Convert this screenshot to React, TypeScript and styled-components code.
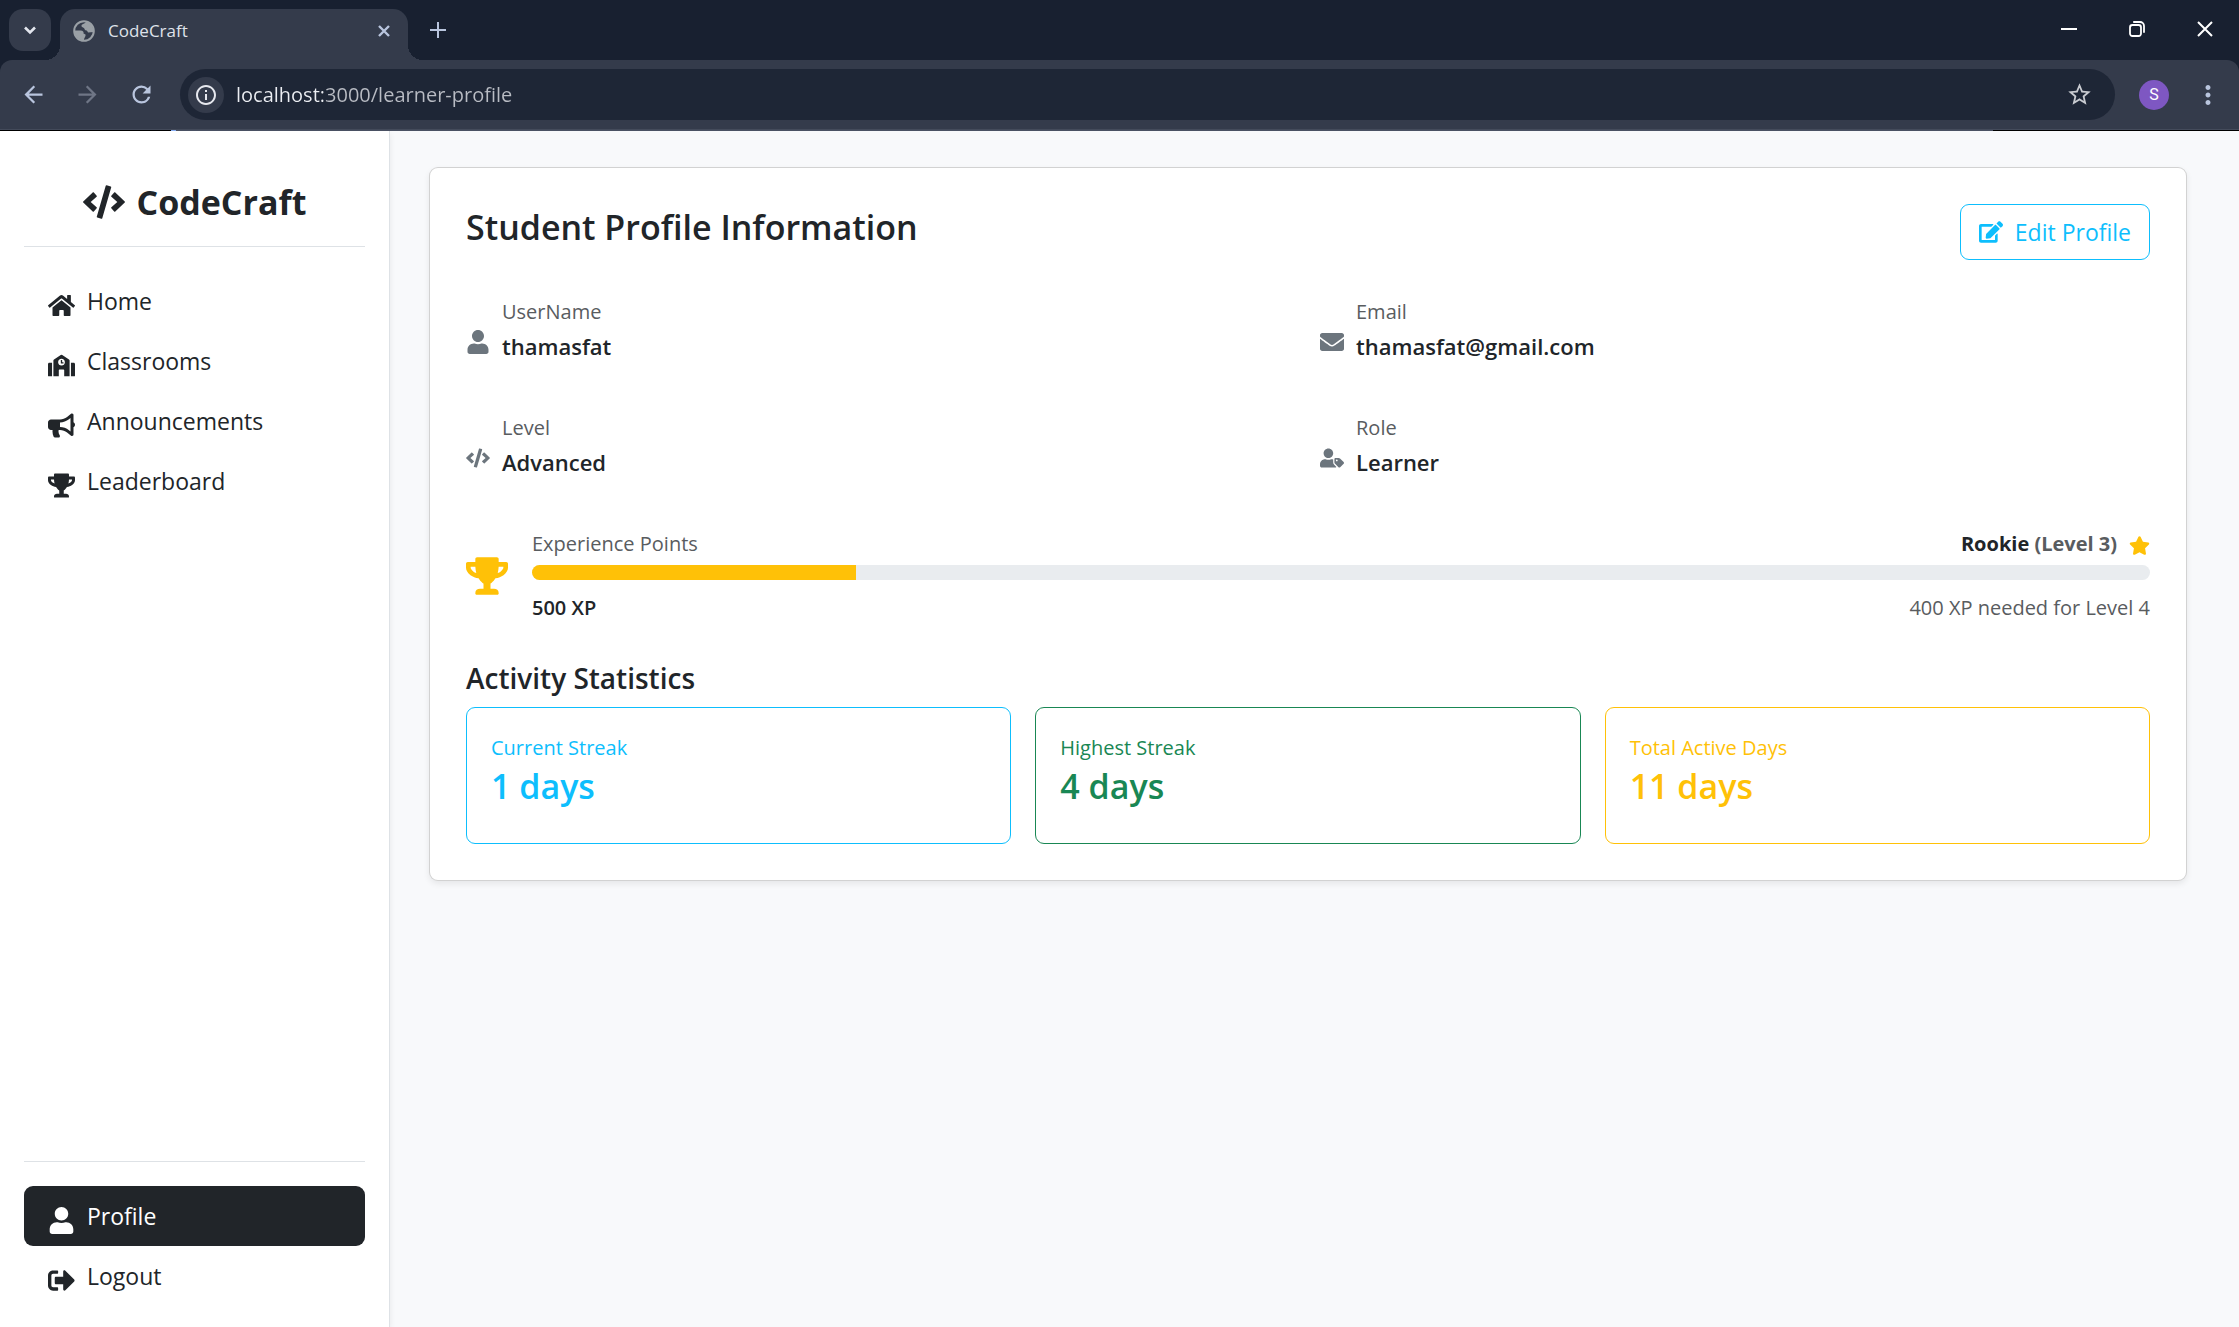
import React from "react";
import styled, { createGlobalStyle, css } from "styled-components";
import {
  FaBullhorn,
  FaCode,
  FaEdit,
  FaEnvelope,
  FaHome,
  FaSchool,
  FaSignOutAlt,
  FaStar,
  FaTrophy,
  FaUser,
  FaUserTag,
} from "react-icons/fa";
import {
  MdArrowBack,
  MdArrowForward,
  MdInfoOutline,
  MdMoreVert,
  MdRefresh,
  MdStarBorder,
} from "react-icons/md";

const color = {
  titleBar: "#182030",
  toolbar: "#343b4b",
  omnibox: "#1e2636",
  chromeIcon: "#b9c5de",
  ink: "#212529",
  inkSoft: "#595c5f",
  iconGray: "#6c757d",
  line: "#dee2e6",
  page: "#f8f9fb",
  info: "#0dbefd",
  success: "#198754",
  warning: "#ffc107",
};

const GlobalStyle = createGlobalStyle`
  *, *::before, *::after { box-sizing: border-box; }
  html, body, #root { height: 100%; }
  body {
    margin: 0;
    color: ${color.ink};
    background: ${color.page};
    font-family: "Open Sans", "Noto Sans", sans-serif;
    font-size: 22px;
    line-height: 36px;
  }
  h1, h2, h3, p, ul, dl, dd { margin: 0; padding: 0; }
  button, input { font: inherit; color: inherit; }
  button { cursor: pointer; }
  svg { display: block; flex: none; }
`;

const Window = styled.div`
  display: flex;
  flex-direction: column;
  min-height: 100%;
`;

/* ---------- browser frame ---------- */

const TitleBar = styled.header`
  display: flex;
  align-items: flex-end;
  height: 60px;
  padding-left: 9px;
  background: ${color.titleBar};
`;

const ChromeButton = styled.button<{ $size?: number; $dim?: boolean }>`
  display: flex;
  flex: none;
  align-items: center;
  justify-content: center;
  width: ${(p) => p.$size ?? 42}px;
  height: ${(p) => p.$size ?? 42}px;
  padding: 0;
  border: 0;
  border-radius: 50%;
  background: none;
  color: ${(p) => (p.$dim ? "#6f7686" : color.chromeIcon)};
`;

const TabSearch = styled(ChromeButton)`
  margin-bottom: 9px;
  border-radius: 14px;
  background: ${color.toolbar};
  color: #e3e6ee;
`;

const Tab = styled.div`
  position: relative;
  display: flex;
  align-items: center;
  gap: 12px;
  width: 348px;
  height: 51px;
  margin-left: 9px;
  padding: 0 12px 8px;
  border-radius: 15px 15px 0 0;
  background: ${color.toolbar};
  color: #dfe2ea;
  font-size: 17px;
  line-height: 24px;

  &::before,
  &::after {
    content: "";
    position: absolute;
    bottom: 0;
    width: 15px;
    height: 15px;
  }
  &::before {
    right: 100%;
    background: radial-gradient(circle at 0 0, transparent 15px, ${color.toolbar} 15px);
  }
  &::after {
    left: 100%;
    background: radial-gradient(circle at 100% 0, transparent 15px, ${color.toolbar} 15px);
  }
`;

const TabTitle = styled.span`
  flex: 1;
`;

const NewTab = styled(ChromeButton)`
  margin: 0 0 9px 9px;
`;

const WindowControls = styled.div`
  display: flex;
  align-self: flex-start;
  margin-left: auto;
`;

const WindowButton = styled.button`
  display: flex;
  align-items: center;
  justify-content: center;
  width: 68px;
  height: 58px;
  padding: 0;
  border: 0;
  background: none;
  color: #fff;
`;

const ToolbarBack = styled.div`
  background: ${color.titleBar};
`;

const Toolbar = styled.div`
  display: flex;
  align-items: center;
  gap: 12px;
  height: 70px;
  padding: 0 10px 0 12px;
  border-bottom: 1px solid #444b5b;
  border-radius: 12px 12px 0 0;
  background: ${color.toolbar};
`;

const Omnibox = styled.div`
  display: flex;
  flex: 1;
  align-items: center;
  gap: 12px;
  height: 51px;
  margin: 0 6px;
  padding: 0 15px 0 8px;
  border-radius: 26px;
  background: ${color.omnibox};
`;

const SiteInfo = styled(ChromeButton)`
  background: ${color.toolbar};
  color: #e6e8ee;
`;

/* The host name is brighter than the rest of the address. */
const Address = styled.input`
  flex: 1;
  min-width: 0;
  height: 36px;
  padding: 0;
  border: 0;
  outline: 0;
  background: linear-gradient(90deg, #eceef3 87px, #b9bcc4 87px) text;
  color: transparent;
  font-size: 20px;
`;

const Avatar = styled(ChromeButton)`
  margin: 0 6px;
  background: #7e57c2;
  color: #fff;
  font-family: Roboto, sans-serif;
  font-size: 16px;
`;

const LoadLine = styled.div`
  height: 1px;
  background: linear-gradient(
    90deg,
    #000 171px,
    #8ab0f5 171px 176px,
    #4a5163 176px calc(100% - 246px),
    #000 calc(100% - 246px)
  );
`;

/* ---------- page ---------- */

const Page = styled.div`
  display: flex;
  flex: 1;
`;

const Sidebar = styled.aside`
  display: flex;
  flex: none;
  flex-direction: column;
  width: 390px;
  padding: 36px 24px 21px;
  border-right: 1px solid ${color.line};
  background: #fff;
  box-shadow: 0 3px 6px rgba(0, 0, 0, 0.075);
`;

const Brand = styled.h1`
  display: flex;
  align-items: center;
  justify-content: center;
  gap: 12px;
  padding: 8px 0 17px;
  border-bottom: 1px solid ${color.line};
  font-size: 34px;
  font-weight: 700;
  line-height: 54px;
`;

const NavList = styled.ul<{ $bottom?: boolean }>`
  padding-top: 24px;
  list-style: none;
  ${(p) =>
    p.$bottom &&
    css`
      margin-top: auto;
      border-top: 1px solid ${color.line};
    `}
`;

const NavLink = styled.a<{ $active?: boolean }>`
  display: flex;
  align-items: flex-end;
  gap: 12px;
  padding: 12px 24px;
  border-radius: 9px;
  background: ${(p) => (p.$active ? color.ink : "transparent")};
  color: ${(p) => (p.$active ? "#fff" : color.ink)};
  font-size: 23px;
  text-decoration: none;
`;

const Main = styled.main`
  flex: 1;
  min-width: 0;
  padding: 36px 52px 36px 39px;
`;

const Card = styled.section`
  padding: 36px;
  border: 1px solid rgba(0, 0, 0, 0.175);
  border-radius: 9px;
  background: #fff;
  box-shadow: 0 3px 6px rgba(0, 0, 0, 0.075);
`;

const CardHeader = styled.div`
  display: flex;
  align-items: flex-start;
  justify-content: space-between;
  margin-bottom: 36px;
`;

const Title = styled.h2`
  font-size: 34px;
  font-weight: 600;
  line-height: 46px;
`;

const EditButton = styled.button`
  display: flex;
  align-items: center;
  gap: 12px;
  padding: 9px 18px;
  border: 1px solid ${color.info};
  border-radius: 9px;
  background: #fff;
  color: ${color.info};
  font-size: 23px;
`;

const Fields = styled.dl`
  display: grid;
  grid-template-columns: 1fr 1fr;
  gap: 48px 24px;
`;

const Field = styled.div`
  display: flex;
  align-items: flex-end;
  gap: 12px;
`;

const FieldIcon = styled.span`
  padding-bottom: 10px;
  color: ${color.iconGray};
`;

const FieldLabel = styled.dt`
  color: ${color.inkSoft};
  font-size: 20px;
  line-height: 32px;
`;

const FieldValue = styled.dd`
  font-weight: 600;
`;

const Experience = styled.div`
  display: flex;
  align-items: center;
  gap: 24px;
  margin: 48px 0 36px;
  color: ${color.warning};
`;

const ExperienceBody = styled.div`
  flex: 1;
`;

const Line = styled.div`
  display: flex;
  align-items: center;
  justify-content: space-between;
  color: ${color.inkSoft};
  font-size: 20px;
  line-height: 32px;
`;

const Rank = styled.span`
  display: flex;
  align-items: flex-end;
  gap: 12px;
  font-weight: 700;

  svg {
    margin-bottom: 4px;
    color: ${color.warning};
  }
`;

const Strong = styled.strong<{ $weight: number }>`
  color: ${color.ink};
  font-weight: ${(p) => p.$weight};
`;

const Track = styled.div`
  height: 15px;
  margin: 5px 0 12px;
  overflow: hidden;
  border-radius: 9px;
  background: #e9ecef;
`;

const Fill = styled.div`
  height: 100%;
  background: ${color.warning};
`;

const SectionTitle = styled.h3`
  margin-bottom: 11px;
  font-size: 28px;
  font-weight: 600;
  line-height: 36px;
`;

const Stats = styled.div`
  display: grid;
  grid-template-columns: repeat(3, 1fr);
  gap: 24px;
`;

const StatCard = styled.div<{ $tone: string }>`
  padding: 24px 24px 35px;
  border: 1px solid ${(p) => p.$tone};
  border-radius: 9px;
  color: ${(p) => p.$tone};
`;

const StatLabel = styled.p`
  font-size: 20px;
  line-height: 32px;
`;

const StatValue = styled.p`
  font-size: 34px;
  font-weight: 600;
  line-height: 44px;
`;

const navItems = [
  { label: "Home", Icon: FaHome },
  { label: "Classrooms", Icon: FaSchool },
  { label: "Announcements", Icon: FaBullhorn },
  { label: "Leaderboard", Icon: FaTrophy },
];

const accountItems = [
  { label: "Profile", Icon: FaUser, active: true },
  { label: "Logout", Icon: FaSignOutAlt, active: false },
];

const fields = [
  { label: "UserName", value: "thamasfat", Icon: FaUser },
  { label: "Email", value: "thamasfat@gmail.com", Icon: FaEnvelope },
  { label: "Level", value: "Advanced", Icon: FaCode },
  { label: "Role", value: "Learner", Icon: FaUserTag },
];

const stats = [
  { label: "Current Streak", value: "1 days", tone: color.info },
  { label: "Highest Streak", value: "4 days", tone: color.success },
  { label: "Total Active Days", value: "11 days", tone: color.warning },
];

const Glyph = ({ d, size, width = 2 }: { d: string; size: number; width?: number }) => (
  <svg
    width={size}
    height={size}
    viewBox={`0 0 ${size} ${size}`}
    fill="none"
    stroke="currentColor"
    strokeWidth={width}
    aria-hidden="true"
  >
    <path d={d} />
  </svg>
);

const Globe = () => (
  <svg width={24} height={24} viewBox="0 0 24 24" aria-hidden="true">
    <circle cx="12" cy="12" r="9.8" fill="none" stroke="#9aa0a6" strokeWidth="2" />
    <path
      fill="#9aa0a6"
      d="M14 2.500C13.500 5 10 4.500 9.500 6.500S12 8 12.500 10s2.500.500 3.500 3.500l5.500-.500A10 10 0 0 0 14 2.500zM2.500 11.500h6c2.500 0 3.500 1.500 3 3l2 1c.500 2-1.500 3-1.500 6a10 10 0 0 1-9.500-10z"
    />
  </svg>
);

const BrowserFrame = () => (
  <>
    <TitleBar>
      <TabSearch aria-label="Search tabs">
        <Glyph size={14} width={2.6} d="M2 4.5l5 5 5-5" />
      </TabSearch>
      <Tab>
        <Globe />
        <TabTitle>CodeCraft</TabTitle>
        <ChromeButton $size={24} aria-label="Close tab">
          <Glyph size={14} width={2.4} d="M2 2l10 10M12 2L2 12" />
        </ChromeButton>
      </Tab>
      <NewTab aria-label="New tab">
        <Glyph size={16} d="M8 0v16M0 8h16" />
      </NewTab>
      <WindowControls>
        <WindowButton aria-label="Minimize">
          <Glyph size={16} d="M0 8h16" />
        </WindowButton>
        <WindowButton aria-label="Restore">
          <Glyph
            size={16}
            width={1.8}
            d="M3.4 4h6.2a2.4 2.4 0 0 1 2.4 2.4v6.2a2.4 2.4 0 0 1-2.4 2.4H3.4A2.4 2.4 0 0 1 1 12.6V6.4A2.4 2.4 0 0 1 3.4 4zM4.2 1H11a4 4 0 0 1 4 4v6.800"
          />
        </WindowButton>
        <WindowButton aria-label="Close">
          <Glyph size={16} d="M1 1l14 14M15 1L1 15" />
        </WindowButton>
      </WindowControls>
    </TitleBar>
    <ToolbarBack>
      <Toolbar>
        <ChromeButton aria-label="Back">
          <MdArrowBack size={27} />
        </ChromeButton>
        <ChromeButton $dim aria-label="Forward">
          <MdArrowForward size={27} />
        </ChromeButton>
        <ChromeButton aria-label="Reload">
          <MdRefresh size={27} />
        </ChromeButton>
        <Omnibox>
          <SiteInfo $size={36} aria-label="Site information">
            <MdInfoOutline size={24} />
          </SiteInfo>
          <Address aria-label="Address" defaultValue="localhost:3000/learner-profile" />
          <ChromeButton aria-label="Bookmark this page">
            <MdStarBorder size={27} color="#c9cbd1" />
          </ChromeButton>
        </Omnibox>
        <Avatar $size={30} aria-label="Account">
          S
        </Avatar>
        <ChromeButton aria-label="Menu">
          <MdMoreVert size={30} />
        </ChromeButton>
      </Toolbar>
    </ToolbarBack>
    <LoadLine />
  </>
);

export default function App() {
  return (
    <Window>
      <GlobalStyle />
      <BrowserFrame />
      <Page>
        <Sidebar>
          <Brand>
            <FaCode size={42} />
            CodeCraft
          </Brand>
          <nav aria-label="Main">
            <NavList>
              {navItems.map(({ label, Icon }) => (
                <li key={label}>
                  <NavLink href="#">
                    <Icon size={27} />
                    {label}
                  </NavLink>
                </li>
              ))}
            </NavList>
          </nav>
          <NavList $bottom>
            {accountItems.map(({ label, Icon, active }) => (
              <li key={label}>
                <NavLink href="#" $active={active}>
                  <Icon size={27} />
                  {label}
                </NavLink>
              </li>
            ))}
          </NavList>
        </Sidebar>
        <Main>
          <Card>
            <CardHeader>
              <Title>Student Profile Information</Title>
              <EditButton>
                <FaEdit size={24} />
                Edit Profile
              </EditButton>
            </CardHeader>
            <Fields>
              {fields.map(({ label, value, Icon }) => (
                <Field key={label}>
                  <FieldIcon>
                    <Icon size={24} />
                  </FieldIcon>
                  <div>
                    <FieldLabel>{label}</FieldLabel>
                    <FieldValue>{value}</FieldValue>
                  </div>
                </Field>
              ))}
            </Fields>
            <Experience>
              <FaTrophy size={42} />
              <ExperienceBody>
                <Line>
                  <span>Experience Points</span>
                  <Rank>
                    <span>
                      <Strong $weight={700}>Rookie</Strong> (Level 3)
                    </span>
                    <FaStar size={21} />
                  </Rank>
                </Line>
                <Track role="progressbar" aria-label="Experience" aria-valuenow={20}>
                  <Fill style={{ width: "20%" }} />
                </Track>
                <Line>
                  <Strong $weight={600}>500 XP</Strong>
                  <span>400 XP needed for Level 4</span>
                </Line>
              </ExperienceBody>
            </Experience>
            <SectionTitle>Activity Statistics</SectionTitle>
            <Stats>
              {stats.map(({ label, value, tone }) => (
                <StatCard key={label} $tone={tone}>
                  <StatLabel>{label}</StatLabel>
                  <StatValue>{value}</StatValue>
                </StatCard>
              ))}
            </Stats>
          </Card>
        </Main>
      </Page>
    </Window>
  );
}
